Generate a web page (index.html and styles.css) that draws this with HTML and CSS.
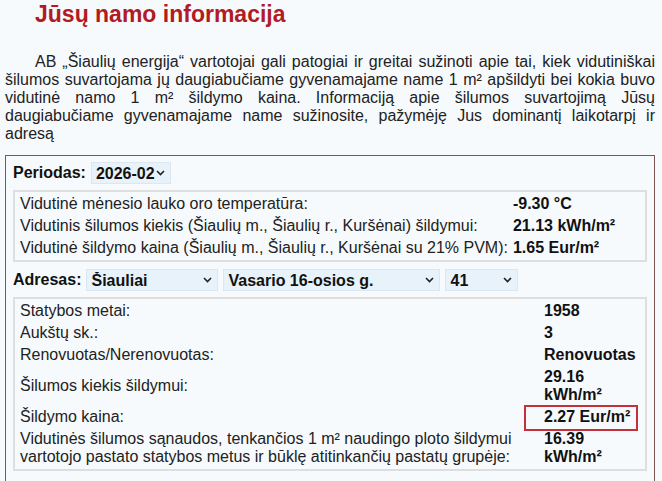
FILE: index.html
```html
<!DOCTYPE html>
<html lang="lt">

<head>
    <meta charset="UTF-8">
    <title>Jūsų namo informacija</title>
    <link rel="stylesheet" href="styles.css">
</head>

<body class="page">
    <h1 class="title">Jūsų namo informacija</h1>
    <p class="intro">AB „Šiaulių energija“ vartotojai gali patogiai ir greitai sužinoti apie tai, kiek vidutiniškai šilumos suvartojama jų daugiabučiame gyvenamajame name 1 m² apšildyti bei kokia buvo vidutinė namo 1 m² šildymo kaina. Informaciją apie šilumos suvartojimą Jūsų daugiabučiame gyvenamajame name sužinosite, pažymėję Jus dominantį laikotarpį ir adresą</p>

    <div class="panel">
        <div class="filter">
            <label>Periodas:</label>
            <select class="pick pick-period">
                <option>2026-02</option>
            </select>
        </div>
        <div class="box">
            <table class="stats">
                <tr>
                    <td>Vidutinė mėnesio lauko oro temperatūra:</td>
                    <td class="val">-9.30 °C</td>
                </tr>
                <tr>
                    <td>Vidutinis šilumos kiekis (Šiaulių m., Šiaulių r., Kuršėnai) šildymui:</td>
                    <td class="val">21.13 kWh/m²</td>
                </tr>
                <tr>
                    <td>Vidutinė šildymo kaina (Šiaulių m., Šiaulių r., Kuršėnai su 21% PVM):</td>
                    <td class="val">1.65 Eur/m²</td>
                </tr>
            </table>
        </div>
        <div class="filter">
            <label>Adresas:</label>
            <select class="pick pick-city">
                <option>Šiauliai</option>
            </select>
            <select class="pick pick-street">
                <option>Vasario 16-osios g.</option>
            </select>
            <select class="pick pick-house">
                <option>41</option>
            </select>
        </div>
        <div class="box">
            <table class="stats house">
                <tr>
                    <td>Statybos metai:</td>
                    <td class="val">1958</td>
                </tr>
                <tr>
                    <td>Aukštų sk.:</td>
                    <td class="val">3</td>
                </tr>
                <tr>
                    <td>Renovuotas/Nerenovuotas:</td>
                    <td class="val">Renovuotas</td>
                </tr>
                <tr>
                    <td>Šilumos kiekis šildymui:</td>
                    <td class="val">29.16 kWh/m²</td>
                </tr>
                <tr>
                    <td>Šildymo kaina:</td>
                    <td class="val marked">2.27 Eur/m²</td>
                </tr>
                <tr>
                    <td>Vidutinės šilumos sąnaudos, tenkančios 1 m² naudingo ploto šildymui vartotojo pastato statybos metus ir būklę atitinkančių pastatų grupėje:</td>
                    <td class="val">16.39 kWh/m²</td>
                </tr>
            </table>
        </div>
    </div>
</body>

</html>
```

FILE: styles.css
```css
* {
    margin: 0;
    padding: 0;
    box-sizing: border-box;
}

body {
    background: #f6fafd;
    color: #222;
    font-family: "Liberation Sans", Arial, sans-serif;
    font-size: 16px;
    padding: 0 7px 0 5px;
}

.title {
    color: #b31b22;
    font-size: 23px;
    font-weight: bold;
    margin-top: 1px;
    padding-left: 30px;
}

.intro {
    margin-top: 25px;
    text-align: justify;
    text-indent: 30px;
}

.panel {
    margin-top: 12px;
    border: 1px solid #7d5750;
    padding: 6px 7px 10px 7px;
}

.filter {
    display: flex;
    align-items: center;
    gap: 5px;
    height: 22px;
}

.filter label {
    font-weight: bold;
    color: #111;
}

.pick {
    appearance: none;
    -webkit-appearance: none;
    height: 22px;
    border: 1px solid #dbe7f1;
    background: #e7f2fb url("data:image/svg+xml;utf8,<svg xmlns='http://www.w3.org/2000/svg' width='9' height='6'><path d='M1 1l3.5 3.5L8 1' fill='none' stroke='%23222' stroke-width='1.6'/></svg>") no-repeat right 5px center;
    font-family: "Liberation Sans", Arial, sans-serif;
    font-size: 16px;
    font-weight: bold;
    color: #111;
    padding: 0 16px 0 4px;
}

.pick-period {
    width: 80px;
    padding-right: 12px;
}

.pick-city {
    width: 132px;
}

.pick-street {
    width: 217px;
}

.pick-house {
    width: 73px;
}

.box {
    border: 2px solid #dedede;
    margin: 6px 0 7px;
}

.stats {
    border-spacing: 2px;
}

.stats td {
    padding: 1px 1px 1px 3px;
    vertical-align: middle;
}

.stats .val {
    font-weight: bold;
    color: #111;
    padding-left: 2px;
}

.house {
    width: 100%;
}

.house .val {
    width: 101px;
}

.marked {
    position: relative;
}

.marked::after {
    content: "";
    position: absolute;
    left: -18px;
    right: 5px;
    top: -2px;
    bottom: -4px;
    border: 2px solid #c4313b;
}
```
